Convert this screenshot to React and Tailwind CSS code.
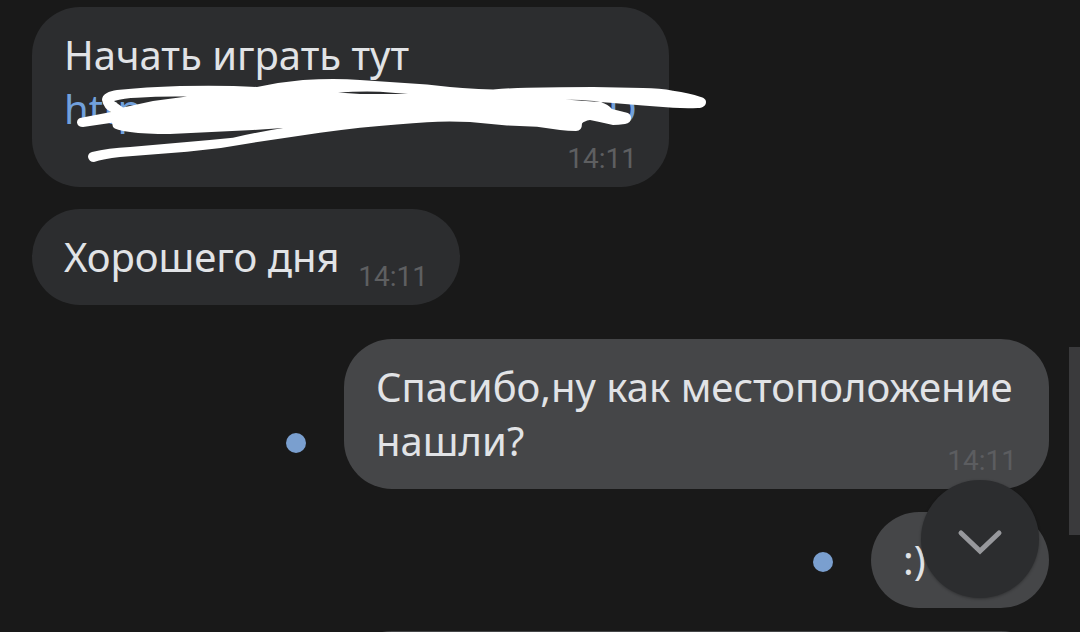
import React from "react";

function Bubble({ outgoing = false, time, timeBelow = false, tone, children }) {
  return (
    <div
      className={`relative grid rounded-[48px] px-8 pt-[21px] pb-[14px] ${
        outgoing ? "max-w-[705px] bg-[#454648]" : "bg-[#2c2d2f]"
      }`}
    >
      <div
        className={`col-start-1 row-start-1 text-[40px] leading-[54px] text-[#e1e3e6] ${
          timeBelow ? "" : "pb-[7px]"
        }`}
      >
        {children}
      </div>
      <time
        className={`col-start-1 self-end justify-self-end font-['Roboto','Noto_Sans',sans-serif] text-[28px] leading-7 ${tone} ${
          timeBelow ? "row-start-2 mt-[9px]" : "row-start-1"
        }`}
      >
        {time}
      </time>
    </div>
  );
}

function UnreadDot() {
  return <span className="mb-9 size-5 shrink-0 rounded-full bg-[#7a9fcf]" />;
}

function Scribble() {
  return (
    <svg
      className="pointer-events-none absolute top-0 left-0"
      width="700"
      height="180"
      viewBox="32 7 700 180"
      fill="#fff"
      fillRule="evenodd"
      aria-hidden="true"
    >
      <path d="M102 100C102 94 109 91 117 90Q145 87 180 86Q225 85 257 87Q280 82 303 80Q335 78 360 80L427 84.500Q465 89 493 89.500Q510 88 527 87.700Q560 87 593 87L643 88Q660 88 673 90.700Q690 93 700 96.700C705 98 706 100 706 102C706 106 702 108 698 108Q685 108.500 673 107.700L643 105.500L610 102.700L565 99.500Q590 100 600 102Q608 104 612 109L627 112.700Q631 114 631 118Q631 123 625 124Q618 125 613 125Q600 122 590 120Q584 121 582 123.500Q582 131 576 131Q568 131 560 130L537 126.700L507 125.500L470 122Q445 121 427 122.300Q400 124 360 127.700Q340 130 320 132.700L253 142.700Q220 149 187 151.700L120 157Q103 159 94 162Q89 162 88 157Q88 153 92 152Q108 148 130 147L187 142Q210 140 233 137.700Q258 132 283 128L253 130L170 134Q145 134 130 132Q115 130 113 127L112 122.700L83 127Q78 127 77 122.700Q77 119 80 118L111 112Q104 109 102 100ZM114 101Q124 98 137 97.700Q160 96 187 96.500L153 101L123 107.500ZM338 92.500Q360 91 380 91.700L408 94Q380 94 360 94Z" />
    </svg>
  );
}

export default function App() {
  return (
    <main className="relative h-screen min-h-[632px] overflow-hidden bg-[#191919] pr-[31px] pl-8 pt-[7px] font-['Noto_Sans','Open_Sans',sans-serif]">
      <div className="flex flex-col">
        <div className="relative flex">
          <div className="w-[637px]">
            <Bubble time="14:11" timeBelow tone="text-[#5e5f61]">
              <p>Начать играть тут</p>
              <a href="#game" className="flex justify-between text-[#71a0dc]">
                <span>http</span>
                <span>D</span>
              </a>
            </Bubble>
          </div>
          <Scribble />
        </div>

        <div className="mt-[22px] flex">
          <div className="w-[428px]">
            <Bubble time="14:11" tone="text-[#5e5f61]">
              <p>Хорошего дня</p>
            </Bubble>
          </div>
        </div>

        <div className="mt-[34px] flex items-end justify-end gap-[38px]">
          <UnreadDot />
          <Bubble outgoing time="14:11" tone="text-[#5c5d60]">
            <p>Спасибо,ну как местоположение нашли?</p>
          </Bubble>
        </div>

        <div className="mt-[23px] flex items-end justify-end gap-[38px]">
          <UnreadDot />
          <div className="w-[178px]">
            <Bubble outgoing time="14:11" tone="text-[#5c5d60]">
              <p>:)</p>
            </Bubble>
          </div>
        </div>

        <div className="mt-[23px] flex justify-end">
          <div className="h-24 w-[705px] rounded-[48px] bg-[#454648]" />
        </div>
      </div>

      <button
        type="button"
        aria-label="Вниз"
        className="absolute right-[41px] bottom-[34px] grid size-[118px] place-items-center rounded-full bg-[#2c2d2f] shadow-[0_1px_3px_rgba(0,0,0,0.3)]"
      >
        <svg width="48" height="32" viewBox="0 0 48 32" fill="none" stroke="#97989c" strokeWidth="5" strokeLinecap="round" strokeLinejoin="miter" aria-hidden="true">
          <path d="M5 10L24 28L43 10" />
        </svg>
      </button>
      <div className="absolute right-0 bottom-[97px] h-[188px] w-[11px] bg-[#3a3a3c]" />
    </main>
  );
}
